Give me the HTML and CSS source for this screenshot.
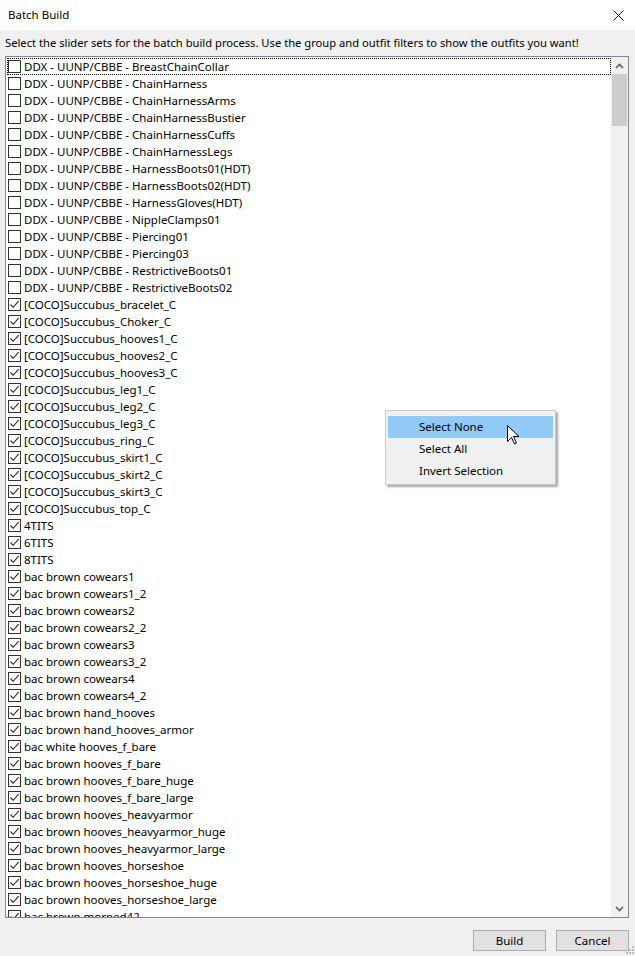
FILE: index.html
```html
<!DOCTYPE html>
<html lang="en">
<head>
    <meta charset="UTF-8">
    <title>Batch Build</title>
    <link rel="stylesheet" href="styles.css">
</head>
<body>
    <div class="window">
        <div class="titlebar">
            <span class="title">Batch Build</span>
            <svg class="close" width="11" height="11" viewBox="0 0 11 11">
                <path d="M0.5 0.5 L10.5 10.5 M10.5 0.5 L0.5 10.5" stroke="#111" stroke-width="1" fill="none"/>
            </svg>
        </div>

        <div class="hint">Select the slider sets for the batch build process. Use the group and outfit filters to show the outfits you want!</div>

        <div class="listbox">
            <div class="items" id="items"></div>
            <div class="scrollbar">
                <div class="arrow">
                    <svg width="9" height="6" viewBox="0 0 9 6"><path d="M1 5 L4.5 1.5 L8 5" stroke="#606060" stroke-width="1.6" fill="none"/></svg>
                </div>
                <div class="thumb"></div>
                <div class="track"></div>
                <div class="arrow">
                    <svg width="9" height="6" viewBox="0 0 9 6"><path d="M1 1 L4.5 4.5 L8 1" stroke="#606060" stroke-width="1.6" fill="none"/></svg>
                </div>
            </div>
        </div>

        <div class="footer">
            <button class="btn">Build</button>
            <button class="btn">Cancel</button>
            <svg class="grip" width="8" height="8" viewBox="0 0 8 8">
                <rect x="6" y="0" width="2" height="2" fill="#bdbdbd"/>
                <rect x="3" y="3" width="2" height="2" fill="#bdbdbd"/>
                <rect x="6" y="3" width="2" height="2" fill="#bdbdbd"/>
                <rect x="0" y="6" width="2" height="2" fill="#bdbdbd"/>
                <rect x="3" y="6" width="2" height="2" fill="#bdbdbd"/>
                <rect x="6" y="6" width="2" height="2" fill="#bdbdbd"/>
            </svg>
        </div>

        <div class="menu">
            <div class="menu-item active">Select None</div>
            <div class="menu-item">Select All</div>
            <div class="menu-item">Invert Selection</div>
        </div>

        <svg class="cursor" width="13" height="20" viewBox="0 0 13 20">
            <path d="M0.5 0.5 L0.5 16.5 L4.5 12.5 L7.5 19 L9.5 18 L6.5 11.5 L12 11.5 Z" fill="#fff" stroke="#000" stroke-width="1" stroke-linejoin="miter"/>
        </svg>
    </div>

    <script>
        const ddx = 'DDX - UUNP/CBBE - ';
        const coco = '[COCO]Succubus_';
        const bac = 'bac brown ';
        const unchecked = [
            'BreastChainCollar', 'ChainHarness', 'ChainHarnessArms', 'ChainHarnessBustier',
            'ChainHarnessCuffs', 'ChainHarnessLegs', 'HarnessBoots01(HDT)', 'HarnessBoots02(HDT)',
            'HarnessGloves(HDT)', 'NippleClamps01', 'Piercing01', 'Piercing03',
            'RestrictiveBoots01', 'RestrictiveBoots02'
        ].map(n => ddx + n);
        const checked = [
            'bracelet_C', 'Choker_C', 'hooves1_C', 'hooves2_C', 'hooves3_C', 'leg1_C', 'leg2_C',
            'leg3_C', 'ring_C', 'skirt1_C', 'skirt2_C', 'skirt3_C', 'top_C'
        ].map(n => coco + n).concat(['4TITS', '6TITS', '8TITS']).concat([
            'cowears1', 'cowears1_2', 'cowears2', 'cowears2_2', 'cowears3', 'cowears3_2',
            'cowears4', 'cowears4_2', 'hand_hooves', 'hand_hooves_armor'
        ].map(n => bac + n)).concat(['bac white hooves_f_bare']).concat([
            'hooves_f_bare', 'hooves_f_bare_huge', 'hooves_f_bare_large', 'hooves_heavyarmor',
            'hooves_heavyarmor_huge', 'hooves_heavyarmor_large', 'hooves_horseshoe',
            'hooves_horseshoe_huge', 'hooves_horseshoe_large', 'morped42'
        ].map(n => bac + n));

        const tick = '<svg width="11" height="11" viewBox="0 0 11 11"><path d="M1.5 5.5 L4.2 8.3 L9.6 2.2" stroke="#222" stroke-width="1.1" fill="none"/></svg>';
        const list = document.getElementById('items');

        function createRow(name, isChecked, index) {
            const row = document.createElement('div');
            row.className = 'row' + (index === 0 ? ' focused' : '');
            row.innerHTML = `<span class="box">${isChecked ? tick : ''}</span><span class="label">${name}</span>`;
            return row;
        }

        unchecked.forEach((n, i) => list.appendChild(createRow(n, false, i)));
        checked.forEach(n => list.appendChild(createRow(n, true, -1)));
    </script>
</body>
</html>
```

FILE: styles.css
```css
*
{
    box-sizing: border-box;
    margin: 0;
    padding: 0;
}
body
{
    font-family: "Noto Sans", "Liberation Sans", sans-serif;
    font-size: 11.5px;
    color: #000;
    background: #f0f0f0;
}
.window
{
    position: relative;
    width: 635px;
    height: 956px;
    background: #f0f0f0;
    overflow: hidden;
}
.titlebar
{
    height: 30px;
    background: #fff;
    display: flex;
    align-items: center;
    justify-content: space-between;
    padding: 0 11px 0 8px;
}
.title
{
    line-height: 16px;
}
.hint
{
    height: 26px;
    padding: 5px 0 0 5px;
    line-height: 16px;
    font-size: 11.2px;
    white-space: nowrap;
}
.listbox
{
    margin-left: 5px;
    width: 624px;
    height: 862px;
    border: 1px solid #828790;
    background: #fff;
    display: flex;
}
.items
{
    flex: 1;
    overflow: hidden;
    padding-top: 1px;
}
.row
{
    height: 17px;
    display: flex;
    align-items: center;
    margin-left: 1px;
    white-space: nowrap;
    border: 1px solid transparent;
}
.row.focused
{
    border: 1px dotted #000;
}
.box
{
    width: 13px;
    height: 13px;
    border: 1px solid #333;
    background: #fff;
    display: flex;
    align-items: center;
    justify-content: center;
    margin-right: 3px;
}
.box svg
{
    display: block;
}
.label
{
    line-height: 15px;
}
.scrollbar
{
    width: 17px;
    background: #f0f0f0;
    display: flex;
    flex-direction: column;
}
.arrow
{
    height: 17px;
    display: flex;
    align-items: center;
    justify-content: center;
}
.thumb
{
    height: 52px;
    margin: 0 1px;
    background: #cdcdcd;
}
.track
{
    flex: 1;
}
.footer
{
    position: relative;
    display: flex;
    justify-content: flex-end;
    gap: 10px;
    padding: 12px 6px 0 0;
}
.btn
{
    width: 73px;
    height: 21px;
    border: 1px solid #adadad;
    background: #e1e1e1;
    font: inherit;
    color: #000;
}
.grip
{
    position: absolute;
    right: 1px;
    top: 28px;
}
.menu
{
    position: absolute;
    left: 385px;
    top: 410px;
    width: 171px;
    padding: 5px 2px 2px 2px;
    background: #f0f0f0;
    border: 1px solid #cccccc;
    box-shadow: 2px 2px 2px rgba(0, 0, 0, 0.35);
}
.menu-item
{
    height: 22px;
    line-height: 22px;
    padding-left: 31px;
}
.menu-item.active
{
    background: #91c9f7;
}
.cursor
{
    position: absolute;
    left: 507px;
    top: 425px;
}
```
